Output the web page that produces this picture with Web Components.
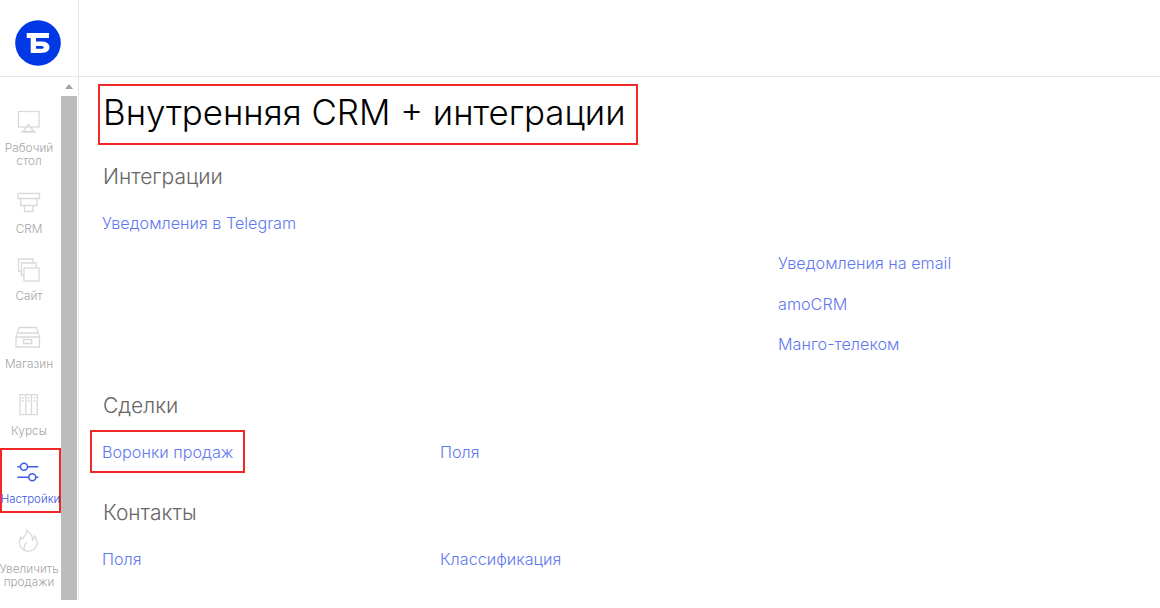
<!DOCTYPE html>
<html lang="ru">
<head>
<meta charset="utf-8">
<title>Настройки</title>
<style>
  html, body { margin: 0; padding: 0; background: #fff; }
  body { font-family: Inter, "Noto Sans", sans-serif; width: 1160px; height: 608px; overflow: hidden; }
</style>
</head>
<body>
<app-shell>
  <brand-logo slot="logo"></brand-logo>
  <side-nav slot="nav">
    <nav-item label="Рабочий стол" icon="desk"></nav-item>
    <nav-item label="CRM" icon="crm"></nav-item>
    <nav-item label="Сайт" icon="site"></nav-item>
    <nav-item label="Магазин" icon="shop"></nav-item>
    <nav-item label="Курсы" icon="courses"></nav-item>
    <nav-item label="Настройки" icon="settings" active></nav-item>
    <nav-item label="Увеличить продажи" icon="fire" style="--gap:10px"></nav-item>
  </side-nav>
  <settings-page slot="main"></settings-page>
</app-shell>

<script>
const ICONS = {
  desk: '<rect x="4.5" y="3.5" width="20.5" height="15.500"/><path d="M14.500 16.500l-5.500 7h11zM7 24h15"/>',
  crm: '<path d="M4 4.500h21.500v5H4zM6.700 9.500h16.300v7H6.700zM10.500 16.500h8.500v6h-8.500z"/>',
  site: '<path d="M19 7V3H4.500v12H7.500"/><path d="M22 12V7H7.500v12.500H10"/><rect x="10" y="12" width="15" height="13"/>',
  shop: '<path d="M5 3.500h17.500l3 9.500H2zM2 13h23.500v10H2zM4 9h19.500M9.500 15.500h8.200v4H9.500z"/>',
  courses: '<path d="M6 3.600h17.300v20H6zM11.800 3.600v20M17.500 3.600v20M7.800 7h2M13.600 7h2M19.400 7h2M7.800 10h2M13.600 10h2M19.400 10h2"/>',
  settings: '<path d="M3.300 7.700h3.200M13.500 7.700h10.800M3.300 18.300h11.500M21.800 18.300h2.500"/><circle cx="10" cy="7.700" r="3.500"/><circle cx="18.300" cy="18.300" r="3.500"/>',
  fire: '<path d="M12.500 3.500C13.500 7 10 9 8 12.500L6.500 10C5.500 12 5.300 14 5.500 16 6 21 10 24.400 14.300 24.400 19 24.400 23.300 20.500 23.300 15.500 23.300 12.500 21.800 10.500 20.500 9 20.300 11 19.500 12 18.500 13 18.500 9 16 5.500 12.500 3.500z"/><path d="M10.500 23.500C9 20 10.500 17.500 13 15.500"/>'
};

class AppShell extends HTMLElement {
  constructor() {
    super();
    this.attachShadow({ mode: 'open' }).innerHTML = `
      <style>
        :host { display: grid; grid-template-columns: 79px 1fr; grid-template-rows: 77px 523px; width: 1160px; }
        .logo { border-right: 1px solid #e6e6e6; border-bottom: 1px solid #e6e6e6; box-sizing: border-box; display: flex; padding: 20px 0 0 15px; }
        .top { border-bottom: 1px solid #e6e6e6; }
        .nav { border-right: 1px solid #e6e6e6; box-sizing: border-box; min-height: 0; }
        .main { min-width: 0; }
      </style>
      <div class="logo"><slot name="logo"></slot></div>
      <div class="top"></div>
      <div class="nav"><slot name="nav"></slot></div>
      <div class="main"><slot name="main"></slot></div>`;
  }
}

class BrandLogo extends HTMLElement {
  constructor() {
    super();
    this.attachShadow({ mode: 'open' }).innerHTML = `
      <style>:host { display: block; width: 46px; height: 46px; } svg { display: block; }</style>
      <svg width="46" height="46" viewBox="0 0 46 46">
        <circle cx="23" cy="23" r="22.800" fill="#0038e6"/>
        <path fill="#fff" fill-rule="evenodd" d="M11.700 13H34V18H21V21.500H26C31 21.500 34.500 23.500 34.500 27.300S31 33 26 33H15.700V18H11.700ZM21 26V28.800H25.500C27.500 28.800 28.800 28.500 28.800 27.400S27.500 26 25.500 26Z"/>
      </svg>`;
  }
}

class SideNav extends HTMLElement {
  constructor() {
    super();
    this.attachShadow({ mode: 'open' }).innerHTML = `
      <style>
        :host { display: flex; height: 523px; overflow: hidden; }
        .items { width: 61px; flex: none; padding-top: 20px; display: flex; flex-direction: column; gap: 2.600px; box-sizing: border-box; }
        .bar { width: 16px; flex: none; background: #f3f3f3; display: flex; flex-direction: column; align-items: center; }
        .arrow { height: 19px; flex: none; display: flex; align-items: center; justify-content: center; background: #fff; width: 100%; }
        .arrow i { width: 0; height: 0; border: 4.500px solid transparent; border-top: 0; border-bottom: 5px solid #a3a3a3; }
        .thumb { flex: 1; width: 100%; background: #bcbcbc; }
      </style>
      <div class="items"><slot></slot></div>
      <div class="bar"><div class="arrow"><i></i></div><div class="thumb"></div></div>`;
  }
}

class NavItem extends HTMLElement {
  constructor() {
    super();
    const root = this.attachShadow({ mode: 'open' });
    root.innerHTML = `
      <style>
        :host { display: block; color: #a6a6a6; }
        .box { display: flex; flex-direction: column; align-items: center; padding: 9px 3px 5px 0; border: 2px solid transparent; box-sizing: border-box; width: 61px; }
        :host([active]) { color: #3d55e6; }
        :host([active]) .box { border-color: #f22828; padding-right: 0; }
        svg { display: block; fill: none; stroke: #d9d9d9; stroke-width: 1.300; overflow: visible; }
        :host([active]) svg { stroke: #3d5ae8; stroke-width: 1.500; margin-right: 3px; }
        span { display: block; margin-top: var(--gap, 8px); font-size: 11.800px; line-height: 13px; font-weight: 300; text-align: center; white-space: pre-line; }
        :host([active]) span { font-size: 11.500px; }
      </style>
      <div class="box">
        <svg width="30" height="26" viewBox="0 0 30 26"></svg>
        <span></span>
      </div>`;
    root.querySelector('svg').innerHTML = ICONS[this.getAttribute('icon')] || '';
    root.querySelector('span').textContent = this.getAttribute('label').replace(' ', '\n');
  }
}

class SettingsPage extends HTMLElement {
  constructor() {
    super();
    this.attachShadow({ mode: 'open' }).innerHTML = `
      <style>
        :host { display: block; padding: 7px 0 0 19px; }
        h1 { margin: 0; display: block; box-sizing: border-box; width: 540px; height: 61px; border: 2px solid #f22828; padding-left: 3px; font-size: 34.900px; line-height: 53px; font-weight: 300; color: #000; white-space: nowrap; }
      </style>
      <h1>Внутренняя CRM + интеграции</h1>
      <link-section title="Интеграции" style="--top:20px">
        <a-link col="1">Уведомления в Telegram</a-link>
        <a-link col="3" row="2">Уведомления на email</a-link>
        <a-link col="3" row="3">amoCRM</a-link>
        <a-link col="3" row="4">Манго-телеком</a-link>
      </link-section>
      <link-section title="Сделки" style="--top:29.600px">
        <a-link col="1" marked>Воронки продаж</a-link>
        <a-link col="2">Поля</a-link>
      </link-section>
      <link-section title="Контакты" style="--top:29px">
        <a-link col="1">Поля</a-link>
        <a-link col="2">Классификация</a-link>
      </link-section>`;
  }
}

class LinkSection extends HTMLElement {
  constructor() {
    super();
    const root = this.attachShadow({ mode: 'open' });
    root.innerHTML = `
      <style>
        :host { display: block; margin-top: var(--top, 0); }
        h2 { margin: 0 0 0 5px; font-size: 21px; line-height: 24px; font-weight: 300; color: #666; }
        .grid { display: grid; grid-template-columns: 338px 338px 338px; grid-auto-rows: 40.300px; margin-top: 14px; padding-left: 4px; align-items: center; }
      </style>
      <h2></h2>
      <div class="grid"><slot></slot></div>`;
    root.querySelector('h2').textContent = this.getAttribute('title');
  }
}

class ALink extends HTMLElement {
  constructor() {
    super();
    this.attachShadow({ mode: 'open' }).innerHTML = `
      <style>
        :host { display: block; font-size: 16.200px; line-height: 20px; font-weight: 300; color: #5f78f0; white-space: nowrap; grid-column: var(--col); grid-row: var(--row); }
        :host([marked]) { margin-left: -12px; }
        .t { display: inline-block; }
        :host([marked]) .t { border: 2px solid #f22828; padding: 9.500px 9px 9.500px 10px; }
      </style>
      <span class="t"><slot></slot></span>`;
    this.style.setProperty('--col', this.getAttribute('col') || 'auto');
    this.style.setProperty('--row', this.getAttribute('row') || '1');
  }
}

customElements.define('app-shell', AppShell);
customElements.define('brand-logo', BrandLogo);
customElements.define('side-nav', SideNav);
customElements.define('nav-item', NavItem);
customElements.define('settings-page', SettingsPage);
customElements.define('link-section', LinkSection);
customElements.define('a-link', ALink);
</script>
</body>
</html>
